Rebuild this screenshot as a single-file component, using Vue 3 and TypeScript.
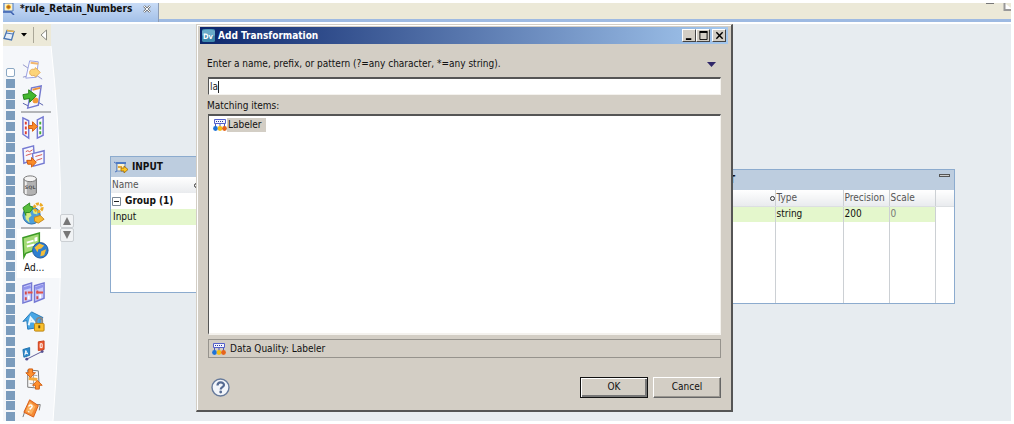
<script setup lang="ts">
import { ref } from 'vue'

interface Tool {
  id: string
  label: string
  caption?: string
  rule?: boolean
}

const tools: Tool[] = [
  { id: 'read', label: 'Read' },
  { id: 'input', label: 'Input', rule: true },
  { id: 'decision', label: 'Decision' },
  { id: 'exception', label: 'Exception' },
  { id: 'sql', label: 'SQL' },
  { id: 'web', label: 'Web service', rule: true },
  { id: 'address', label: 'Address Validator', caption: 'Ad...' },
  { id: 'assoc', label: 'Association' },
  { id: 'mask', label: 'Case Converter' },
  { id: 'compare', label: 'Comparison' },
  { id: 'consolidate', label: 'Consolidation' },
  { id: 'decide', label: 'Decision rule' },
]

const perforations = 33
const pattern = ref('la')
const selected = ref('Labeler')
</script>

<template>
  <div class="app">
    <nav class="tabs">
      <a class="tab" href="#rule">
        <svg class="i12" viewBox="0 0 12 12">
          <path d="M1 0h9v8H1z" fill="#fff3c9" stroke="#4a78c0" />
          <circle cx="5.500" cy="4" r="2" fill="#b5651d" stroke="#f0b020" />
          <path d="M0 9h8l3 3" fill="none" stroke="#3b5fae" stroke-width="1.500" />
        </svg>
        <span>*rule_Retain_Numbers</span>
        <svg class="x" viewBox="0 0 8 8"><path d="M1 1l6 6M7 1l-6 6" stroke="#777" stroke-width="2.400" /><path d="M1 1l6 6M7 1l-6 6" stroke="#f7fafd" stroke-width="1" /></svg>
      </a>
      <svg class="winctl" viewBox="0 0 26 12"><path d="M1 0h8" stroke="#777" stroke-width="2" /><path d="M19.500 0v7h9" fill="#fff" stroke="#999" stroke-width="2" /></svg>
    </nav>

    <div class="editor">
      <aside class="palette">
        <div class="bar">
          <button class="flat" aria-label="Palette mode">
            <svg width="12" height="12" viewBox="0 0 12 12"><path d="M4 1.500l7 1-2.500 8.500-7.500-1.500z" fill="#e6eef8" stroke="#4a76b4" stroke-width="1.300" /><path d="M4 1.500l7 1" stroke="#e9b450" stroke-width="1.500" /><path d="M3 4l7 1" stroke="#4a76b4" /></svg>
            <svg width="6" height="4" viewBox="0 0 6 4"><path d="M0 0h6L3 3.500z" /></svg>
          </button>
          <i class="sep"></i>
          <button class="flat" aria-label="Collapse palette">
            <svg width="8" height="12" viewBox="0 0 8 12"><path d="M6.500 1v10L1 6z" fill="#fff" stroke="#8c8c84" /></svg>
          </button>
        </div>
        <svg class="shape" viewBox="0 0 58 374" preserveAspectRatio="none">
          <path d="M0 0H48Q57 80 58 170Q58 270 50 374H0z" fill="#f5f7fa" />
          <path d="M48 0Q57 80 58 170Q58 270 50 374" fill="none" stroke="#fff" />
        </svg>
        <div class="film"><i v-for="n in perforations" :key="n"></i></div>
        <div class="tools">
          <div v-for="t in tools" :key="t.id" class="slot" :class="{ rule: t.rule, active: t.caption }">
            <button class="tool" :aria-label="t.label">
              <svg v-if="t.id === 'read'" viewBox="0 0 26 26" class="faded">
                <path d="M2 8l6 4M2 21l7-2M16 19l6 4" stroke="#7477b8" />
                <path d="M9 4l9 1-2 16-11 1z" fill="#fff" stroke="#7b83d8" /><path d="M10 6l8 1" stroke="#f0a040" stroke-width="2" />
                <path d="M9 16c0-3 3-4 5-3l1-2 5 5-5 5-1-2c-3 1-5 0-5-3z" fill="#ffc94d" stroke="#e0952a" />
              </svg>
              <svg v-else-if="t.id === 'input'" viewBox="0 0 26 26">
                <path d="M2 19l6 3M18 18l5 3" stroke="#555dab" />
                <path d="M11 3l10-2-3 20-11 3z" fill="#f8f8ff" stroke="#7379cf" stroke-width="1.500" /><path d="M12 5l8-2" stroke="#ed9440" stroke-width="2" />
                <circle cx="15" cy="16" r="3" fill="#f19a38" /><path d="M2 10l6-1V5l8 6-7 7v-4l-6 1z" fill="#43b82f" stroke="#238019" />
              </svg>
              <svg v-else-if="t.id === 'decision'" viewBox="0 0 26 26">
                <path d="M2 3l6 3v18l-6-4zM17 5l6-3v19l-6 3z" fill="#fafaff" stroke="#7378d2" stroke-width="1.500" />
                <path d="M5 7v3m0 2v3m0 2v3" stroke="#df3f35" stroke-width="2" /><path d="M20 7v3m0 2v3m0 2v3" stroke="#46ad36" stroke-width="2" />
                <path d="M8 11h4V7l5 5-5 5v-3H8z" fill="#f98d29" stroke="#d55b0d" />
              </svg>
              <svg v-else-if="t.id === 'exception'" viewBox="0 0 26 26">
                <path d="M2 5l11-3 1 14-11 4z" fill="#f7f8ff" stroke="#757ad2" stroke-width="1.500" /><path d="M12 10l12-3v13l-11 3z" fill="#f7f8ff" stroke="#757ad2" stroke-width="1.500" />
                <path d="M5 8l2-1 2 1 3-2M5 12l6-2M15 13l7-2M16 17l6-2" stroke="#d5534e" fill="none" />
                <path d="M6 17h5v-3l5 5-5 5v-3H7z" fill="#fa8c28" stroke="#cf580e" />
              </svg>
              <svg v-else-if="t.id === 'sql'" viewBox="0 0 26 26">
                <path d="M3 6v15c2 3 11 3 13 0V6z" fill="#b3b3b3" stroke="#707070" /><path d="M5 8v14" stroke="#eee" stroke-width="2" />
                <ellipse cx="9.500" cy="6" rx="6.500" ry="3" fill="#f4f4f4" stroke="#777" /><text x="4" y="17" class="sql">SQL</text>
              </svg>
              <svg v-else-if="t.id === 'web'" viewBox="0 0 26 26">
                <circle cx="11" cy="15" r="9" fill="#4d9fd9" stroke="#286ba7" /><path d="M4 12l5-1 2 4-3 3 1 5-4-4zM12 9l5 1v4l-4-1z" fill="#d7ec83" />
                <path d="M2 7l7-5v3l4 2-4 5H5v3z" fill="#58bd3c" stroke="#2c8b20" /><circle cx="18" cy="7" r="4" fill="none" stroke="#edab24" stroke-width="3" stroke-dasharray="3 1" />
                <path d="M14 17l6-2 4 4-6 4-4-2z" fill="#f6bc32" stroke="#c88517" />
              </svg>
              <svg v-else-if="t.id === 'address'" viewBox="0 0 30 28">
                <path d="M2 6l17-5v16L5 22l-2 4z" fill="#a4db76" stroke="#3b9a25" stroke-width="1.500" /><path d="M6 11l7-2M6 15l8-2" stroke="#fff" stroke-width="2" /><path d="M14 6l3-1v4l-3 1z" fill="#fff" />
                <circle cx="20" cy="19" r="8" fill="#2d7fd0" stroke="#1d5599" /><path d="M14 16l5-4 5 2-3 3-3 1-1 3zM21 20l5-2-2 6-4 1z" fill="#f4bd3a" />
              </svg>
              <svg v-else-if="t.id === 'assoc'" viewBox="0 0 26 26">
                <path d="M2 6l9-3v18l-9 3zM14 6l10-3v16l-10 4z" fill="#c9cbfb" stroke="#7579d4" stroke-width="1.500" /><path d="M3 9l7-2M15 9l8-3" stroke="#8f93ec" stroke-width="3" />
                <path d="M5 12v3m0 3v3M17 11v3m0 3v3" stroke="#d34a4a" stroke-width="2" /><path d="M7 13h5m4 0h7" stroke="#e35145" stroke-width="2" /><path d="M8 16v4M20 15v4" stroke="#fff" stroke-width="2" />
              </svg>
              <svg v-else-if="t.id === 'mask'" viewBox="0 0 26 26">
                <path d="M2 13L11 3l12 6-3 2v8l-13 2-1-9z" fill="#48a7e5" stroke="#2378b8" /><path d="M8 17l2-8 6 7M9 13l4 0" fill="none" stroke="#e9f8ff" stroke-width="2" />
                <path d="M16 15v-3c1-4 6-4 6 0v3" fill="none" stroke="#868686" stroke-width="2" /><rect x="14" y="15" width="10" height="8" rx="1" fill="#f9bf2b" stroke="#b98210" /><path d="M19 17v3" stroke="#70500d" stroke-width="2" />
              </svg>
              <svg v-else-if="t.id === 'compare'" viewBox="0 0 26 26">
                <path d="M6 22l16-8" stroke="#5c5995" /><circle cx="6" cy="22" r="1.500" fill="#555293" /><circle cx="22" cy="14" r="1.500" fill="#555293" />
                <path d="M2 12l7-2v8l-6 2z" fill="#2d88cb" stroke="#2073ae" /><path d="M4 18l1-5 2 4M4 16h3" fill="none" stroke="#fff" />
                <path d="M18 4l6-1v9l-6 1z" fill="#ed5b30" stroke="#c83c19" /><path d="M20 6v4h2V6z" fill="none" stroke="#fff" />
              </svg>
              <svg v-else-if="t.id === 'consolidate'" viewBox="0 0 26 26">
                <path d="M7 3l11 1 1 18-12-1z" fill="#fafafa" stroke="#777" /><path d="M9 8l8 1M9 17l8 1M13 5v16" stroke="#aaa" /><path d="M8 12l9 1" stroke="#f5ac3c" stroke-width="3" />
                <path d="M8 2h4v4h3l-5 5-5-5h3zM15 23v-4h-3l5-5 5 5h-3v4z" fill="#ff912e" stroke="#d05e13" />
              </svg>
              <svg v-else viewBox="0 0 26 26">
                <path d="M2 24l3-9M15 11l5 0-1 6" fill="none" stroke="#777" /><path d="M9 6l9 6-5 12-10-5z" fill="#f58b35" stroke="#d65d18" />
                <path d="M9 8l6 5-4 8-6-3z" fill="#fbb05f" /><path d="M8 13c1-3 5-1 3 1l-2 2m-1 2v1" fill="none" stroke="#fff" stroke-width="1.500" />
              </svg>
            </button>
            <span v-if="t.caption" class="cap">{{ t.caption }}</span>
          </div>
        </div>
      </aside>

      <main class="canvas">
        <div class="scroller">
          <button aria-label="Scroll up"><svg viewBox="0 0 8 8"><path d="M4 0l4 8H0z" fill="#777" /></svg></button>
          <button aria-label="Scroll down"><svg viewBox="0 0 8 8"><path d="M0 0h8L4 8z" fill="#777" /></svg></button>
        </div>

        <section class="node in">
          <header>
            <svg class="i14" viewBox="0 0 14 12"><path d="M0 1l3 2v7l-2 1" fill="none" stroke="#4c74bd" /><path d="M3 2h8v8H3z" fill="#fff3c9" stroke="#668bc8" /><path d="M2 2h10" stroke="#4e7bc4" stroke-width="2" /><path d="M4 6h4" stroke="#e0a63d" stroke-width="2" /><path d="M7 7h3V5l4 3.500-4 3.500v-2H7z" fill="#ffc51f" stroke="#9b6a10" stroke-width=".8" /></svg>
            INPUT
          </header>
          <div class="cols"><span>Name</span><i class="ring"></i></div>
          <div class="group"><svg width="9" height="9" viewBox="0 0 9 9"><path d="M.5 .5h8v8h-8z" fill="#fff" stroke="#7b8794" /><path d="M2 4.500h5" stroke="#222" /></svg>Group (1)</div>
          <div class="row">Input</div>
        </section>

        <section class="node out">
          <header>OUTPUT<i class="min"></i></header>
          <table>
            <thead><tr><th class="c0"><i class="ring"></i></th><th class="c1">Type</th><th class="c2">Precision</th><th class="c3">Scale</th><th class="c4"></th></tr></thead>
            <tbody>
              <tr class="green"><td></td><td>string</td><td>200</td><td class="dim">0</td><td class="last"></td></tr>
              <tr class="fill"><td></td><td></td><td></td><td></td><td></td></tr>
            </tbody>
          </table>
        </section>
      </main>

      <form class="dialog" role="dialog" aria-labelledby="dlg-title" @submit.prevent>
        <header class="title">
          <svg class="dv" viewBox="0 0 14 14"><rect width="14" height="14" rx="2" fill="#3d87ac" /><path d="M0 2q7-3 14 0v5H0z" fill="#6aabc9" /><text x="1" y="11">Dv</text></svg>
          <span id="dlg-title">Add Transformation</span>
          <div class="wb">
            <button type="button" aria-label="Minimize"><svg viewBox="0 0 10 10"><path d="M1 9h6" stroke="#000" stroke-width="2" /></svg></button>
            <button type="button" aria-label="Maximize"><svg viewBox="0 0 10 10"><path d="M1 1.500h8v8H1z" fill="none" stroke="#000" /><path d="M.5 1h9" stroke="#000" stroke-width="2" /></svg></button>
            <button type="button" aria-label="Close" class="close"><svg viewBox="0 0 10 10"><path d="M1.500 1.500l7 7M8.500 1.500l-7 7" stroke="#000" stroke-width="1.600" /></svg></button>
          </div>
        </header>
        <div class="body">
          <div class="prompt">
            <label for="pattern">Enter a name, prefix, or pattern (?=any character, *=any string).</label>
            <button type="button" class="menu" aria-label="View menu"><svg width="9" height="5" viewBox="0 0 9 5"><path d="M0 0h9L4.500 5z" fill="#2f2768" /></svg></button>
          </div>
          <div class="field"><input id="pattern" v-model="pattern" type="text" size="1" /><i class="caret"></i></div>
          <div class="match" id="match">Matching items:</div>
          <ul class="list" role="listbox" aria-labelledby="match">
            <li role="option" aria-selected="true">
              <svg class="lab" viewBox="0 0 14 12"><path d="M1.500 .5h11v4h-11z" fill="#f3f5ff" stroke="#5561cb" /><path d="M3 2.500h8" stroke="#303a98" stroke-dasharray="1 1" /><path d="M2.500 5v3M7 5v3M11.500 5v3" stroke="#4b57bd" /><circle cx="2.500" cy="9.500" r="2.400" fill="#1d72d8" /><circle cx="7" cy="9.500" r="2.400" fill="#f1bd19" /><circle cx="11.500" cy="9.500" r="2.400" fill="#e6641b" /></svg>
              <span>{{ selected }}</span>
            </li>
          </ul>
          <div class="status">
            <svg class="lab" viewBox="0 0 14 12"><path d="M1.500 .5h11v4h-11z" fill="#f3f5ff" stroke="#5561cb" /><path d="M3 2.500h8" stroke="#303a98" stroke-dasharray="1 1" /><path d="M2.500 5v3M7 5v3M11.500 5v3" stroke="#4b57bd" /><circle cx="2.500" cy="9.500" r="2.400" fill="#1d72d8" /><circle cx="7" cy="9.500" r="2.400" fill="#f1bd19" /><circle cx="11.500" cy="9.500" r="2.400" fill="#e6641b" /></svg>
            <span>Data Quality: {{ selected }}</span>
          </div>
          <footer>
            <button type="button" class="help" aria-label="Help"><svg viewBox="0 0 19 19"><circle cx="9.500" cy="9.500" r="8.500" fill="#f2f5fa" stroke="#667a9b" stroke-width="1.400" /><path d="M6.500 7.500c0-4 6.500-4 6.500-.5 0 2.200-3.300 2.200-3.300 4.500" fill="none" stroke="#566b92" stroke-width="2.200" /><circle cx="9.700" cy="14" r="1.400" fill="#566b92" /></svg></button>
            <button type="submit" class="btn ok">OK</button>
            <button type="button" class="btn">Cancel</button>
          </footer>
        </div>
      </form>
    </div>
  </div>
</template>

<style>
body { margin: 0; background: #fff; }
</style>

<style scoped>
* { box-sizing: border-box; }
.app { min-height: 100vh; padding: 3px; display: flex; flex-direction: column; font: 10px/14px "DejaVu Sans Condensed", "DejaVu Sans", sans-serif; color: #111; }
button { font: inherit; color: inherit; padding: 0; border: 0; background: none; display: flex; align-items: center; justify-content: center; }
svg { display: block; flex: none; overflow: hidden; }
.tabs { height: 19px; display: flex; justify-content: space-between; background: #ece9d8; border-bottom: 3px solid #9ebae2; }
.tab { display: flex; align-items: center; gap: 5px; width: 156px; height: 19px; background: linear-gradient(#c9dcf6, #a3c0e8); border-right: 1px solid #8e9db5; color: #111; font-weight: bold; text-decoration: none; white-space: nowrap; overflow: hidden; padding-bottom: 7px; }
.i12 { width: 12px; height: 12px; }
.x { width: 8px; height: 8px; margin-left: 6px; }
.winctl { width: 26px; height: 12px; }
.editor { flex: 1; position: relative; display: flex; margin-top: 2px; background: #e7ecf0; }
.palette { width: 58px; flex: none; display: grid; grid-template: 22px 1fr / 14px 1fr; }
.bar { grid-area: 1 / 1 / 2 / 3; width: 48px; display: flex; align-items: center; gap: 6px; background: #ece9d8; }
.bar .flat { gap: 6px; }
.sep { width: 1px; height: 16px; background: #aaa798; }
.shape { grid-area: 2 / 1 / 3 / 3; width: 100%; height: 100%; }
.film { grid-area: 2 / 1; display: flex; flex-direction: column; justify-content: space-between; align-items: center; padding: 22px 0 0; }
.film i { width: 9px; height: 9px; background: #7b9cbd; }
.film i:first-child { background: #fff; border: 1px solid #8ba7c3; border-radius: 2px; }
.tools { grid-area: 2 / 2; display: flex; flex-direction: column; padding-top: 9px; overflow: hidden; }
.slot { height: 29px; flex: none; display: flex; flex-direction: column; align-items: flex-start; justify-content: center; padding-left: 4px; }
.slot:last-child { height: 24px; }
.slot.rule { border-bottom: 2px solid #b3b5b8; border-image: linear-gradient(90deg, transparent 5px, #b3b5b8 5px 33px, transparent 33px) 1; }
.slot.active { height: 49px; background: #fff; justify-content: flex-start; padding-top: 2px; }
.tool svg { width: 25px; height: 25px; }
.active .tool svg { width: 29px; height: 29px; }
.faded { opacity: .75; }
.sql { font: bold 5px "DejaVu Sans", sans-serif; fill: #555; }
.cap { padding: 1px 0 0 3px; font-size: 10px; }
.canvas { flex: 1; }
.scroller { position: absolute; left: 57px; top: 190px; display: grid; gap: 0; }
.scroller button { width: 14px; height: 14px; border: 1px solid #cbcfd3; border-radius: 2px; background: #f1f3f5; }
.scroller svg { width: 8px; height: 8px; }
.node { position: absolute; border: 1px solid #8cabce; background: #fff; }
.node header { background: #bdcddf; font-weight: bold; display: flex; align-items: center; }
.in { left: 107px; top: 132px; width: 230px; height: 137px; }
.in header { height: 20px; padding-left: 3px; gap: 4px; }
.i14 { width: 14px; height: 12px; }
.cols { height: 16px; width: 88px; display: flex; justify-content: space-between; align-items: center; padding-left: 1px; background: linear-gradient(#fff, #e9ebee); color: #555; }
.ring { display: inline-block; width: 5px; height: 5px; border: 1px solid #333; border-radius: 50%; }
.group { height: 16px; display: flex; align-items: center; gap: 4px; padding-left: 1px; font-weight: bold; }
.row { height: 16px; background: #e4f7cc; padding: 1px 2px; }
.out { left: 686px; top: 145px; width: 266px; height: 135px; display: flex; flex-direction: column; }
.out header { height: 20px; flex: none; justify-content: space-between; padding: 0 4px; }
.min { width: 11px; height: 3px; border: 1px solid #555; background: #ccc; margin-bottom: 9px; }
table { border-collapse: collapse; table-layout: fixed; width: 100%; flex: 1; display: table; height: 113px; }
th { height: 16px; padding: 0 0 0 1px; background: linear-gradient(#fff, #e9ebee); border-right: 1px solid #ccd0d4; border-bottom: 1px solid #dcdfe2; text-align: left; font-weight: normal; color: #555; }
td { padding: 0 0 0 1px; height: 16px; border-right: 1px solid #ccd0d4; }
th:last-child, td:last-child { border-right: 0; }
.c0 { width: 85px; text-align: right; }
.c1 { width: 68px; }
.c2 { width: 46px; }
.c3 { width: 46px; }
.green td { background: #e4f7cc; }
.green .last { background: #fff; }
.green .dim { color: #777; }
.fill td { height: auto; }
.dialog { position: absolute; left: 193px; right: 278px; top: 0; height: 388px; display: flex; flex-direction: column; padding: 2px; background: #d3cec5; border: 1px solid #d3cec5; border-right: 2px solid #555; border-bottom: 2px solid #555; box-shadow: inset 1px 1px #fff; }
.title { height: 17px; flex: none; margin: 0 1px; padding: 0 2px; display: flex; align-items: center; gap: 3px; color: #fff; font-weight: bold; background: linear-gradient(90deg, #0c266c, #a4c8ef); }
.dv { width: 13px; height: 13px; }
.dv text { font: bold 8px "DejaVu Sans Condensed", sans-serif; fill: #fff; }
.wb { margin-left: auto; display: flex; }
.wb button { width: 14px; height: 13px; background: #d3cec5; border: 1px solid; border-color: #fff #444 #444 #fff; }
.wb svg { width: 9px; height: 9px; }
.wb .close { margin-left: 2px; }
.body { flex: 1; display: flex; flex-direction: column; padding: 12px 8px 10px 8px; }
.prompt { display: flex; justify-content: space-between; align-items: center; height: 16px; padding-right: 5px; }
.field { display: flex; align-items: center; margin: 5px 0 0 1px; height: 18px; background: #fff; border: 1px solid; border-color: #555 #f4f2ee #f4f2ee #555; border-top-width: 2px; padding-left: 1px; }
.field input { width: 8px; border: 0; padding: 0; outline: 0; background: none; font: inherit; color: #222; }
.caret { width: 1px; height: 12px; background: #222; }
.match { margin-top: 4px; height: 14px; }
.list { flex: 1; margin: 1px 0 0 1px; padding: 1px 4px; list-style: none; background: #fff; border: 1px solid; border-color: #555 #f4f2ee #f4f2ee #555; border-top-width: 2px; border-bottom-width: 2px; }
.list li { display: flex; align-items: center; height: 16px; }
.list span { background: #d3cec5; padding: 0 4px 0 1px; }
.lab { width: 14px; height: 12px; }
.status { display: flex; align-items: center; gap: 4px; height: 19px; margin: 4px 0 0 1px; padding-left: 3px; border: 1px solid #96938d; }
footer { display: flex; align-items: center; gap: 5px; margin-top: 18px; height: 22px; }
.help { margin: 0 auto 0 4px; }
.help svg { width: 19px; height: 19px; }
.btn { width: 68px; height: 21px; background: #d3cec5; border: 1px solid; border-color: #fff #666 #666 #fff; box-shadow: inset -1px -1px #98958f; }
.ok { border: 1px solid #111; box-shadow: inset 1px 1px #fff, inset -2px -2px #777; }
</style>
